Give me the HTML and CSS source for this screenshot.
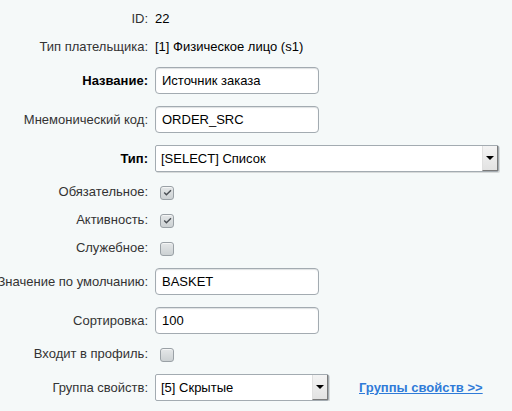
FILE: index.html
```html
<!DOCTYPE html>
<html>
<head>
<meta charset="utf-8">
<link rel="stylesheet" href="styles.css">
</head>
<body>
<div class="form">
  <div class="label">ID:</div>
  <div class="value">22</div>

  <div class="label">Тип плательщика:</div>
  <div class="value">[1] Физическое лицо (s1)</div>

  <div class="label bold">Название:</div>
  <div class="value"><div class="input">Источник заказа</div></div>

  <div class="label">Мнемонический код:</div>
  <div class="value"><div class="input">ORDER_SRC</div></div>

  <div class="label bold">Тип:</div>
  <div class="value"><div class="select select-wide"><span class="sel-text">[SELECT] Список</span><span class="sel-btn"><span class="arrow"></span></span></div></div>

  <div class="label">Обязательное:</div>
  <div class="value"><span class="check"><svg viewBox="0 0 13 13" width="13" height="13"><path d="M3.2 6.6 L5.4 8.8 L10 4.2" fill="none" stroke="#4a4f54" stroke-width="1.4"/></svg></span></div>

  <div class="label">Активность:</div>
  <div class="value"><span class="check"><svg viewBox="0 0 13 13" width="13" height="13"><path d="M3.2 6.6 L5.4 8.8 L10 4.2" fill="none" stroke="#4a4f54" stroke-width="1.4"/></svg></span></div>

  <div class="label">Служебное:</div>
  <div class="value"><span class="check"></span></div>

  <div class="label">Значение по умолчанию:</div>
  <div class="value"><div class="input">BASKET</div></div>

  <div class="label">Сортировка:</div>
  <div class="value"><div class="input">100</div></div>

  <div class="label">Входит в профиль:</div>
  <div class="value"><span class="check"></span></div>

  <div class="label">Группа свойств:</div>
  <div class="value row"><div class="select select-small"><span class="sel-text">[5] Скрытые</span><span class="sel-btn"><span class="arrow"></span></span></div><a class="link" href="#">Группы свойств &gt;&gt;</a></div>
</div>
</body>
</html>
```

FILE: styles.css
```css
html, body {
  margin: 0;
  padding: 0;
  background: #f5f9f9;
}
body {
  font-family: "Liberation Sans", Arial, sans-serif;
  font-size: 13px;
  color: #000;
}
.form {
  display: grid;
  grid-template-columns: 148px 1fr;
  column-gap: 7px;
  row-gap: 12px;
  align-items: center;
  padding-top: 11px;
}
.label {
  display: flex;
  justify-content: flex-end;
  white-space: nowrap;
  line-height: 16px;
  color: #333;
}
.label.bold {
  font-weight: bold;
  color: #000;
}
.value {
  line-height: 16px;
  white-space: nowrap;
  display: flex;
  align-items: center;
  min-height: 16px;
}
.input {
  box-sizing: border-box;
  width: 164px;
  height: 27px;
  line-height: 25px;
  padding: 0 6px;
  background: #fff;
  border: 1px solid #a3abb1;
  border-radius: 4px;
  box-shadow: inset 0 1px 1px rgba(180, 188, 191, 0.45);
  color: #000;
}
.check {
  box-sizing: border-box;
  width: 14px;
  height: 14px;
  margin-left: 5px;
  margin-top: 1px;
  border: 1px solid #9aa1a6;
  border-radius: 3px;
  background: linear-gradient(#e4e7e8, #ccd1d3);
  box-shadow: inset 0 1px 0 rgba(255,255,255,0.6);
  display: flex;
  align-items: center;
  justify-content: center;
}
.check svg {
  display: block;
  margin: -1px;
}
.select {
  box-sizing: border-box;
  height: 27px;
  display: flex;
  align-items: stretch;
  background: #fff;
  border: 1px solid #a3abb1;
  border-radius: 2px;
  box-shadow: 1px 1px 0 rgba(0,0,0,0.12);
}
.select-wide { width: 344px; }
.select-small { width: 174px; }
.sel-text {
  flex: 1;
  line-height: 25px;
  padding-left: 5px;
  color: #000;
}
.sel-btn {
  box-sizing: border-box;
  width: 16px;
  background: linear-gradient(#f4f4f4, #e2e2e2);
  border-left: 1px solid #e0e0e0;
  border-right: 1px solid #7a7a7a;
  border-bottom: 1px solid #7a7a7a;
  display: flex;
  align-items: center;
  justify-content: center;
}
.arrow {
  width: 0;
  height: 0;
  border-left: 4px solid transparent;
  border-right: 4px solid transparent;
  border-top: 4px solid #000;
}
.row {
  display: flex;
  align-items: center;
}
.link {
  margin-left: 30px;
  color: #2f7bd8;
  font-weight: bold;
  text-decoration: underline;
}
```
